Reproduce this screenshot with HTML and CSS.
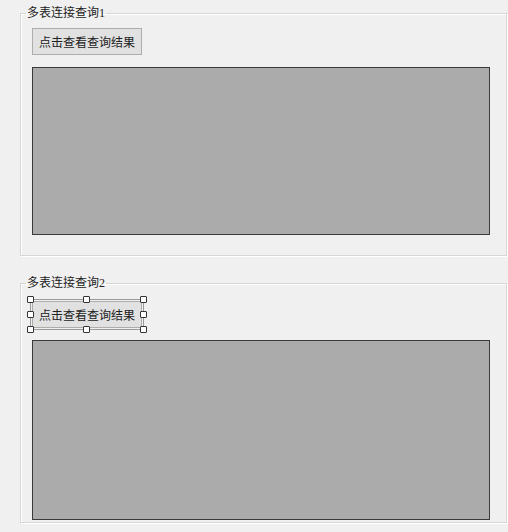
FILE: index.html
```html
<!DOCTYPE html>
<html lang="zh-CN">
<head>
  <meta charset="UTF-8">
  <meta name="viewport" content="width=device-width, initial-scale=1.0">
  <title>多表连接查询</title>
  <link rel="stylesheet" href="styles.css">
</head>
<body>
  <fieldset class="group group-first">
    <legend>多表连接查询1</legend>
    <div class="body">
      <button type="button" class="query-btn">点击查看查询结果</button>
      <div class="result result-first"></div>
    </div>
  </fieldset>

  <fieldset class="group group-second">
    <legend>多表连接查询2</legend>
    <div class="body">
      <div class="selected">
        <button type="button" class="query-btn">点击查看查询结果</button>
        <div class="sel-frame">
          <span class="handle h-tl"></span><span class="handle h-tc"></span><span class="handle h-tr"></span>
          <span class="handle h-ml"></span><span class="handle h-mr"></span>
          <span class="handle h-bl"></span><span class="handle h-bc"></span><span class="handle h-br"></span>
        </div>
      </div>
      <div class="result result-second"></div>
    </div>
  </fieldset>
</body>
</html>
```

FILE: styles.css
```css
html, body { margin: 0; padding: 0; }
body { background: #f0f0f0; font-family: "Liberation Serif", "Noto Sans CJK SC", serif; font-size: 12px; color: #222; width: 508px; height: 532px; overflow: hidden; }

.group { box-sizing: border-box; width: 487px; min-width: 0; margin: 0 0 0 20px; padding: 0 16px 0 5px; border: 1px solid #d6d6d6; box-shadow: inset 1px 1px 0 #fff, 1px 1px 0 #fff; }
.group legend { padding: 0 1px; line-height: 16px; font-size: 12px; color: #222; }
.group-first { margin-top: 5px; padding-top: 7px; padding-bottom: 20px; }
.group-second { margin-top: 19px; padding-top: 10px; padding-bottom: 2px; }

.body { margin-left: 6px; display: flex; flex-direction: column; align-items: flex-start; }

.query-btn { box-sizing: border-box; width: 110px; height: 27px; margin: 0; padding: 0; background: #e1e1e1; border: 1px solid #adadad; border-radius: 0; font-family: inherit; font-size: 12px; color: #222; }

.result { box-sizing: border-box; width: 458px; margin-top: 12px; background: #ababab; border: 1px solid #3a3a3a; }
.result-first { height: 168px; }
.result-second { height: 180px; }

/* designer selection around the second button */
.selected { position: relative; }
.sel-frame { position: absolute; left: -2px; top: -2px; right: -2px; bottom: -2px; border: 1px solid #9a9a9a; }
.handle { position: absolute; width: 5px; height: 5px; background: #fff; border: 1px solid #333; border-radius: 1px; }
.h-tl, .h-tc, .h-tr { top: -4px; }
.h-ml, .h-mr { top: calc(50% - 4px); }
.h-bl, .h-bc, .h-br { bottom: -4px; }
.h-tl, .h-ml, .h-bl { left: -4px; }
.h-tc, .h-bc { left: calc(50% - 4px); }
.h-tr, .h-mr, .h-br { right: -4px; }
```
